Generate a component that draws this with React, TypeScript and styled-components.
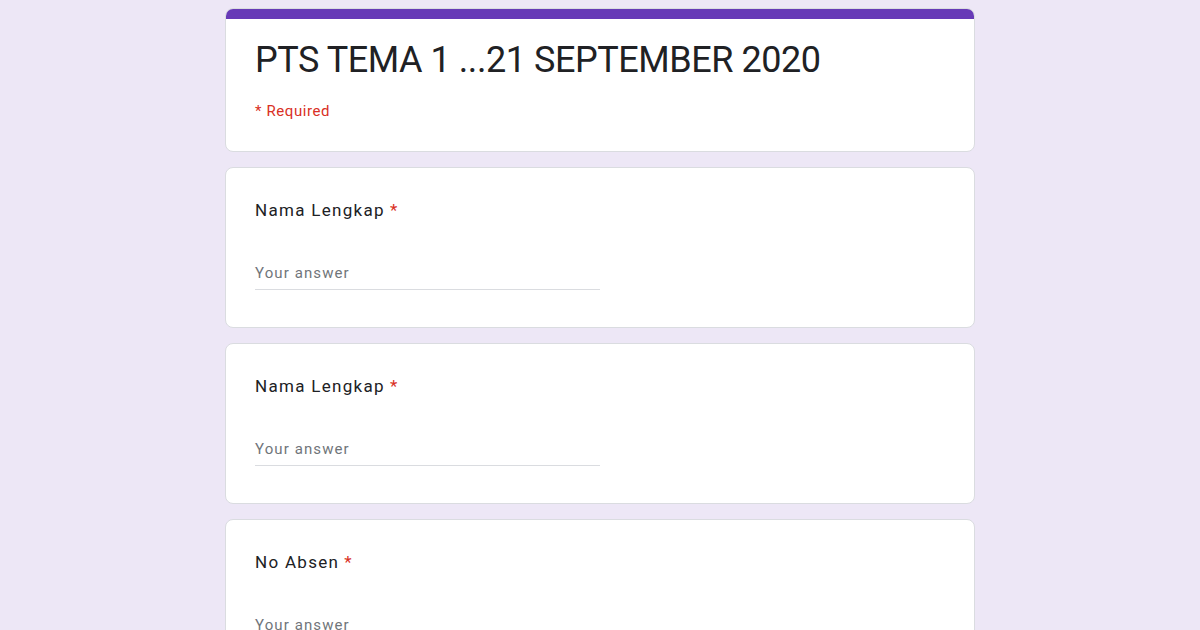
import React from "react";
import styled, { createGlobalStyle } from "styled-components";

const Global = createGlobalStyle`
  html, body { margin: 0; padding: 0; background: #ede7f6; }
  body { font-family: Roboto, "Noto Sans", Arial, sans-serif; color: #202124; }
`;

const Page = styled.div`
  width: 750px;
  margin: 0 auto;
  padding-top: 8px;
  display: flex;
  flex-direction: column;
  gap: 15px;
`;

const Card = styled.div`
  background: #fff;
  border: 1px solid #dadce0;
  border-radius: 8px;
  overflow: hidden;
  box-sizing: border-box;
`;

const TopBar = styled.div`
  height: 11px;
  background: #673ab7;
  margin: -1px -1px 0;
`;

const HeaderBody = styled.div`
  padding: 19px 30px 30px 29px;
`;

const Title = styled.h1`
  margin: 0;
  font-family: Roboto, sans-serif;
  font-weight: 400;
  font-size: 36px;
  line-height: 44px;
  letter-spacing: -0.45px;
  color: #202124;
`;

const RequiredNote = styled.div`
  margin-top: 19px;
  font-size: 15px;
  line-height: 20px;
  color: #d93025;
  letter-spacing: 0.6px;
`;

const QuestionBody = styled.div`
  height: 159px;
  padding: 30px 30px 0 29px;
  box-sizing: border-box;
`;

const Label = styled.div`
  font-size: 17px;
  line-height: 24px;
  color: #202124;
  letter-spacing: 1.3px;
`;

const Star = styled.span`
  color: #d93025;
  margin-left: 5px;
`;

const Answer = styled.div`
  margin-top: 41px;
  width: 345px;
  border-bottom: 1px solid #dadce0;
  font-size: 15px;
  line-height: 20px;
  padding-bottom: 6px;
  color: #70757a;
  letter-spacing: 1.1px;
`;

const questions = ["Nama Lengkap", "Nama Lengkap", "No Absen"];

export default function App() {
  return (
    <>
      <Global />
      <Page>
        <Card>
          <TopBar />
          <HeaderBody>
            <Title>PTS TEMA 1 ...21 SEPTEMBER 2020</Title>
            <RequiredNote>* Required</RequiredNote>
          </HeaderBody>
        </Card>
        {questions.map((q, i) => (
          <Card key={i}>
            <QuestionBody>
              <Label>
                {q}
                <Star>*</Star>
              </Label>
              <Answer>Your answer</Answer>
            </QuestionBody>
          </Card>
        ))}
      </Page>
    </>
  );
}
